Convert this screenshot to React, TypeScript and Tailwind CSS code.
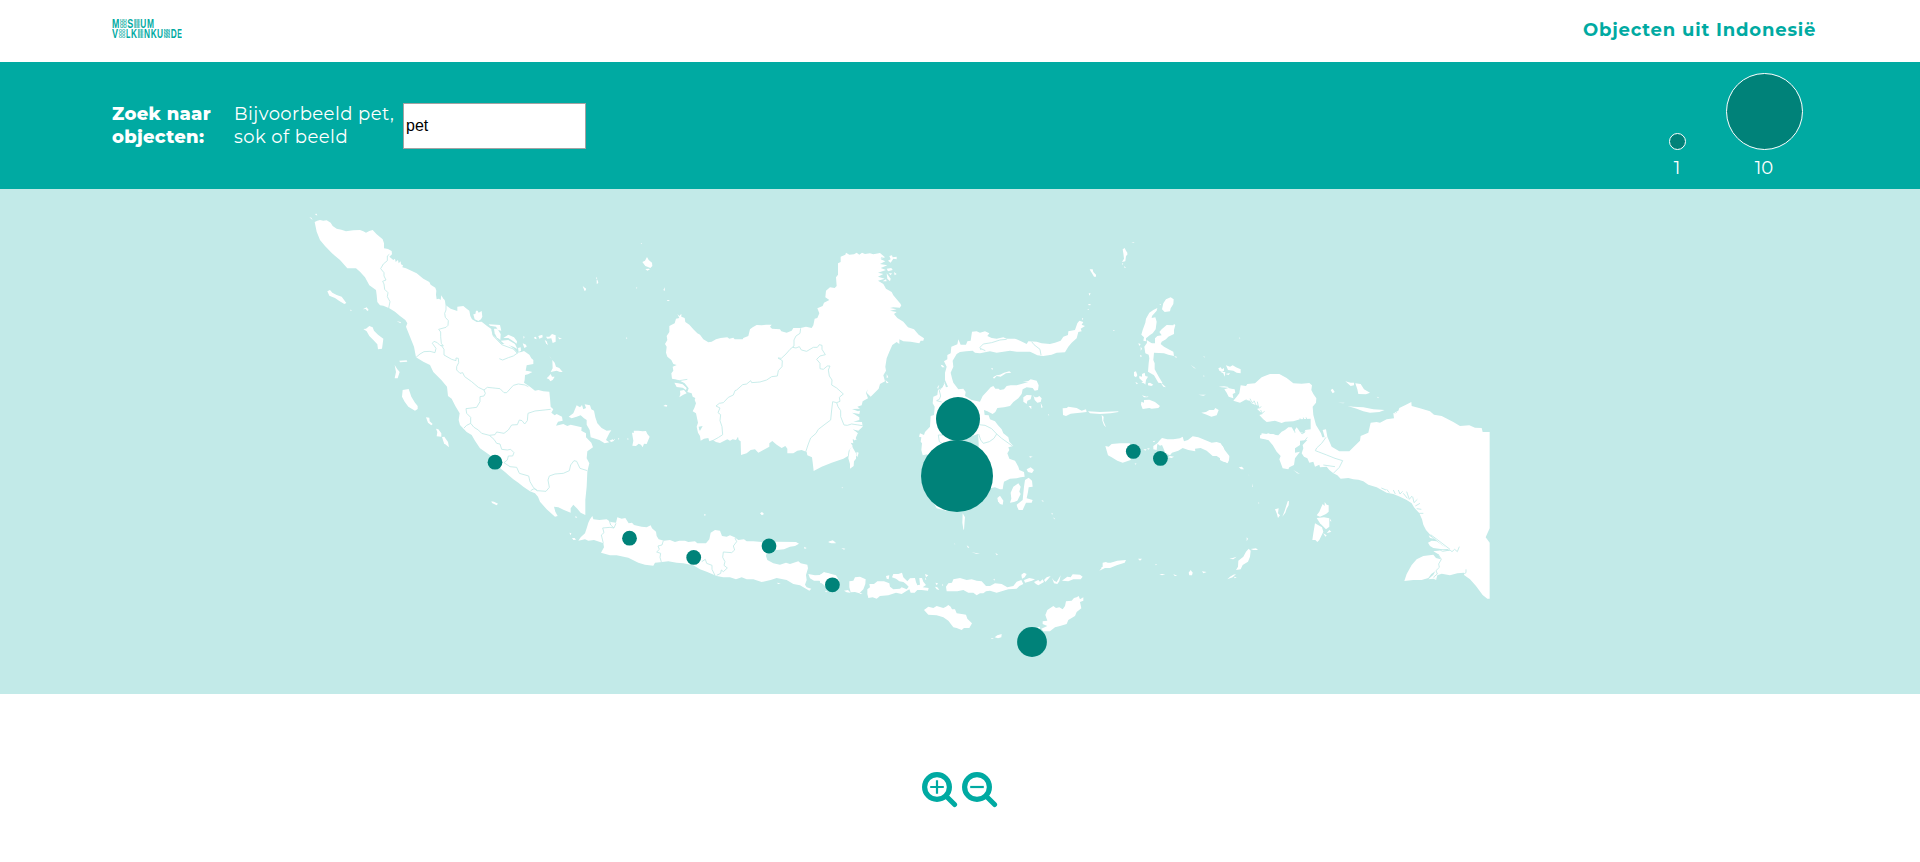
import React from "react";

type Sheet = { x: number; y: number; land: string[]; water?: string[]; borders?: string[] };

// Each sheet is drawn at three units per pixel from its own origin.
const sheets: Sheet[] = [
  {
    // Sumatra
    x: 300,
    y: 200,
    land: [
      "44,66 52,62 60,60 70,62 80,61 92,68 98,78 110,86 124,89 138,94 160,91 180,90 190,94 198,98 208,93 218,90 230,103 248,118 252,130 252,145 264,147 275,153 276,163 268,170 280,180 285,176 287,186 294,180 296,190 302,184 303,193 309,196 307,202 318,205 350,220 370,236 388,246 392,254 406,263 409,272 408,284 410,298 417,296 422,300 424,286 430,296 434,300 438,316 452,326 472,333 472,320 490,318 500,326 508,332 511,348 516,358 530,366 545,365 560,377 575,388 578,405 588,414 605,432 622,432 640,445 652,458 664,456 672,453 688,464 694,475 700,480 700,492 680,496 677,512 688,514 697,516 684,523 675,525 674,540 672,548 690,560 705,572 715,570 730,574 748,575 750,595 752,620 760,628 754,638 764,646 770,642 786,650 788,662 774,665 768,677 790,672 802,678 812,674 845,682 844,692 858,700 858,712 874,728 879,742 862,754 860,775 868,790 864,806 862,815 860,860 856,900 856,945 842,938 832,926 820,914 812,925 812,938 792,930 775,922 762,920 766,935 773,948 765,950 740,928 720,905 714,890 705,880 690,874 670,860 655,848 640,838 615,816 600,804 570,766 540,745 525,722 515,705 500,696 480,675 476,660 479,640 466,618 455,596 444,588 441,560 424,540 400,516 390,495 370,485 348,472 342,440 330,410 318,380 322,370 316,360 300,348 285,335 268,325 250,317 240,316 232,306 230,285 228,270 208,256 195,232 180,215 168,205 142,205 120,180 96,160 75,138 60,120 50,95",
      "44,42 50,41 52,47", "28,52 34,53 38,60",
      "82,274 90,270 97,278 110,285 125,290 139,309 133,312 118,303 105,294 88,287",
      "188,328 200,322 206,330 202,333 197,327", "150,329 155,330 153,334", "290,364 302,366 302,370",
      "190,387 198,386 208,378 218,382 222,392 234,404 250,416 248,432 246,446 234,448 232,433 220,420 208,408 200,394",
      "298,482 320,481 322,485 300,487", "284,495 292,508 299,516 293,535 284,535 288,516",
      "308,570 326,567 330,578 334,590 345,608 353,618 353,627 345,632 325,620 314,605 306,590",
      "378,652 388,653 389,664 398,672 394,676 384,668", "408,686 415,688 424,700 424,710 410,709 412,696",
      "426,711 433,710 444,726 447,742 432,730", "574,904 582,905 594,911 590,916 576,909",
      "520,343 526,342 528,332 533,332 536,338 545,333 547,350 543,358 535,363 524,358",
      "566,373 600,375 604,392 594,390 588,380 570,377", "582,386 592,386 602,402 601,420 590,412 584,400",
      "602,422 625,420 645,432 652,447 640,440 612,431", "610,414 625,404 642,412 651,424 650,431 640,424 625,414",
      "654,444 662,442 663,452 656,456", "668,430 678,434 680,440 673,444", "670,408 674,411 671,416",
      "702,412 708,410 710,418 704,416", "715,408 727,404 728,412 718,416", "738,410 748,410 756,402 767,406 767,425 758,429 754,415 742,416",
      "734,420 740,424 744,436 738,430", "774,412 786,416 778,418",
      "757,480 764,488 768,500 778,504 788,516 780,516 770,512 752,516 758,505", "740,535 747,528 752,522 756,530 764,530 758,540 751,544 747,538",
      "748,468 756,478 752,474",
      "806,650 820,640 824,630 830,616 840,622 846,615 850,628 858,624 854,613 870,616 874,628 882,632 886,652 892,670 905,684 920,692 934,691 928,700 922,712 918,720 928,727 914,730 898,720 872,712 869,690 860,674 860,660 852,655 842,646 830,650 815,655",
      "928,722 938,718 943,722 934,726", "954,714 958,716 955,719",
      "848,258 858,266 854,274", "890,238 894,246 890,252", "888,232 892,234 889,238",
      "826,948 832,952 827,954",
    ],
    borders: [
      "268,163 262,168 262,182 250,192 242,206 252,218 252,228 258,240 248,244 252,252 254,268 264,278 262,290 270,305 266,325",
      "438,305 438,330 434,340 436,352 445,362 444,376 438,382 416,388 422,396 422,410 424,430 430,438 420,436 412,428 402,424 397,430 408,445 405,458 390,454 372,455 360,462 348,472",
      "424,436 432,448 432,465 455,478 468,482 468,474 475,475 476,488 470,500 470,510 480,520 488,518 494,530 515,545 535,562 552,570 562,562 600,566 612,578 620,578 640,556 655,552 675,555 685,560",
      "552,570 556,580 552,588 540,590 540,605 530,622 498,626 500,640 512,652 512,670 500,676 492,684",
      "512,670 522,682 535,690 545,700 568,706 585,704 590,696 612,700 625,690 635,675 652,674 658,660 666,662 674,672 682,662 684,640 705,633 752,628",
      "568,706 582,718 590,730 600,732 605,748 622,750 632,748 642,758 638,768 625,768 622,780 612,788 630,800 650,802 658,820 686,828 690,845 700,862 712,872 738,874 748,862 744,840 748,828 765,822 790,820 808,812 812,795 822,782 830,784 840,805 862,812",
      "712,872 702,866 692,872",
      "598,476 608,480 625,473 640,468 654,458",
      "575,388 580,408 605,434 640,447 652,460",
    ],
  },
  {
    // Natuna, Belitung
    x: 540,
    y: 240,
    land: [
      "307,66 315,62 321,51 326,60 336,68 337,78 331,84 322,80 316,78", "316,87 326,86 330,88 322,92",
      "132,145 138,146 136,153", "172,118 175,128 171,132", "370,150 375,142 374,153", "380,180 390,180 384,184",
      "276,578 282,578 281,572 295,572 308,574 318,573 322,582 329,590 324,602 320,612 312,611 308,622 303,614 296,611 288,618 277,617 280,602",
      "262,594 266,597 263,600", "258,292 262,294 260,298", "302,10 306,9 304,13", "288,142 292,143 290,146",
      "665,818 670,820 664,824", "905,742 910,743 906,745", "222,596 225,598 222,600",
    ],
  },
  {
    // Kalimantan
    x: 640,
    y: 240,
    land: [
      "112,222 118,228 124,221 124,230 134,234 136,246 148,254 160,268 172,280 180,284 190,298 205,307 215,305 228,298 242,294 262,292 268,296 280,293 284,298 308,298 310,294 325,288 330,268 338,262 350,255 365,256 378,254 395,254 390,260 396,266 420,268 424,274 440,278 455,272 460,264 482,264 498,260 515,264 520,256 524,236 532,234 538,220 532,205 548,198 552,188 568,180 556,172 558,152 570,142 584,144 590,138 588,112 594,104 594,70 602,66 602,50 616,44 618,38 628,44 642,43 650,38 658,44 666,38 675,42 690,40 700,43 720,39 735,52 722,58 736,64 720,72 742,76 722,84 738,90 714,98 730,102 714,110 734,116 714,122 730,132 738,146 755,156 760,166 770,178 782,192 780,203 760,202 750,204 770,208 750,212 770,216 762,222 772,234 790,245 804,262 822,268 836,284 852,295 850,302 842,302 838,310 812,305 790,304 778,298 778,312 770,306 757,315 748,335 740,355 736,380 738,392 730,406 735,424 720,432 716,446 704,458 692,470 680,458 684,448 678,458 684,475 668,484 665,496 652,500 660,506 636,507 654,514 660,512 658,522 636,518 658,532 658,540 640,545 666,546 668,560 655,572 638,568 654,580 645,592 650,600 638,598 640,610 632,608 638,618 626,632 624,648 610,656 575,668 545,680 521,693 519,675 516,652 502,646 500,636 485,630 472,632 460,640 442,640 442,626 436,618 425,624 410,614 397,603 388,610 388,620 370,630 355,638 345,628 332,630 320,640 303,645 302,604 296,600 294,590 288,600 278,598 270,602 262,598 240,609 228,606 218,600 208,604 205,594 192,596 182,602 180,588 174,578 170,560 174,548 168,520 158,514 163,504 168,490 164,480 166,474 158,470 155,460 142,456 146,445 134,430 120,422 96,416 94,400 100,392 98,380 110,375 100,372 94,360 82,350 78,338 80,320 75,312 82,300 80,288 88,276 88,258 104,250 108,236 118,234",
      "103,428 115,430 128,433 140,444 138,450 128,443 110,441", "120,452 132,450 140,460 130,464 118,472 121,462",
      "70,498 76,494 82,496 80,500", "629,630 636,618 640,626 648,640 648,656 642,664 641,678 630,686 630,672 625,655",
      "650,636 656,638 652,652 649,646", "748,48 756,46 758,52 770,50 770,58 760,56 752,68 744,62 752,58",
      "740,86 754,84 758,90 744,94", "740,100 752,116 750,124 742,116", "746,100 756,100 752,106", "762,96 770,102 764,106",
      "728,124 738,118 740,124", "740,402 745,412 740,414", "736,420 746,428 740,430",
      "644,572 652,582 644,602 638,592",
    ],
    water: ["724,52 734,54 722,56", "176,560 188,558 180,572 178,570"],
    borders: [
      "482,265 480,280 468,288 462,300 462,318 450,328 438,342 424,355 414,354 427,362 426,380 415,392 412,408 395,410 380,420 360,426 335,428 332,422 320,432 308,434 290,450 285,452 280,465 265,472 250,488 238,490 228,498 240,504 234,518 242,524 240,542 246,560 248,584 236,592 218,602",
      "458,322 468,324 478,320 484,330 500,334 520,322 532,322 538,314 546,316 546,328 556,344 540,348 530,358 540,370 540,386 550,388 562,378 570,378 565,390 568,408 576,420 575,435 590,444 610,462 598,472 600,484 590,488 578,485 575,510 572,540 552,555 535,568 528,580 512,594 505,612 497,636",
      "590,488 594,500 602,512 602,530 612,555 622,556 635,552 668,557",
      "96,418 118,422 142,418", "104,424 130,430 142,444",
    ],
  },
  {
    // Sulawesi
    x: 900,
    y: 300,
    land: [
      "532,70 538,62 550,66 545,74 555,78 542,86 545,94 535,96 530,115 515,128 505,140 495,157 470,158 455,164 430,168 412,166 400,160 390,155 350,155 330,152 310,155 290,158 270,154 240,160 225,158 218,152 198,154 180,156 170,162 158,182 160,200 152,218 156,235 160,248 175,268 190,266 197,276 195,288 215,300 240,305 248,288 260,275 272,262 280,258 286,266 296,266 300,270 312,268 320,258 332,256 350,256 372,250 385,246 368,244 385,243 392,238 410,242 416,256 414,270 404,272 398,264 380,262 368,268 365,282 355,295 340,306 330,318 312,322 292,324 286,336 278,342 262,334 252,330 254,345 266,346 270,358 285,364 294,376 305,388 310,400 325,412 328,425 340,438 325,442 328,450 322,460 328,476 345,482 355,500 358,510 372,516 374,530 362,532 350,535 330,536 312,545 310,555 308,568 300,568 285,562 270,565 235,520 160,600 138,632 110,625 102,610 90,550 82,463 68,466 64,450 66,430 62,425 64,412 57,410 60,400 72,405 75,396 90,380 92,348 102,345 104,320 98,310 100,290 112,285 114,270 128,262 133,246 138,262 144,260 135,240 135,218 140,200 132,184 142,178 142,165 152,160 154,140 172,133 175,118 182,134 198,134 202,124 212,122 216,95 230,94 240,98 255,94 268,100 262,108 275,114 290,116 310,112 320,116 345,116 360,122 380,132 385,124 410,125 425,130 450,132 465,128 482,122 490,110 504,105 505,94 525,90",
      "122,194 128,196 134,202 126,202", "118,254 112,262 114,268",
      "279,232 290,226 300,224 312,218 328,214 334,218 318,220 302,230 290,228 282,236", "273,205 279,205 277,210",
      "370,292 380,285 395,286 392,298 382,302 380,312 370,305", "400,285 404,292 412,292 418,288 425,295 422,306 412,308 404,300",
      "422,308 428,322 424,324", "386,318 394,318 394,328", "445,342 448,346 444,346", "388,468 398,470 390,473",
      "488,325 500,324 505,320 530,324 545,332 558,328 560,336 540,338 525,340 512,341 498,348 489,345", "564,334 600,336 655,334 655,336 632,340 600,342 570,340",
      "605,345 611,350 610,362 618,382 612,376 607,362",
      "375,540 386,533 396,542 398,560 386,562 384,576 380,595 398,600 395,608 378,608 368,630 356,630 352,622 350,614 368,600 370,580 372,560", 
      "340,560 355,550 362,560 358,575 362,582 352,602 342,606 330,608 334,596 332,578",
      "292,594 300,587 310,602 308,614 300,612 294,604", "380,508 392,502 402,510 396,519 384,516",
      "188,640 195,652 194,662 192,690 190,688 187,668", "424,600 430,602 430,607", "454,638 459,641 456,644", "460,652 466,658 462,657",
      "564,12 570,14 566,16", "0,12 4,16 0,22", "640,90 643,93 640,93",
    ],
    water: ["184,428 205,412 234,402 236,428 236,450 215,440"],
    borders: [
      "243,150 240,142 250,132 275,128 300,120 320,118", "243,146 256,152", "395,125 402,134 420,148 423,165",
      "133,250 118,272 122,288 118,298 110,302 125,306", "236,374 255,376 275,386 290,402 282,415 268,425 250,430 242,420 236,402", "290,402 305,415 340,440", "130,405 115,405 118,425 128,432",
      "260,334 262,345",
    ],
  },
  {
    // Moluccas
    x: 1040,
    y: 230,
    land: [
      "248,58 254,54 258,62 262,68 262,74 258,78 256,94 246,96 252,86 250,70", "246,99 250,101 248,105", "252,108 258,113 254,114",
      "149,118 158,118 160,126 168,134 168,140 162,140 156,130 152,124", "146,190 152,190 148,197", "146,222 152,222 150,227", "144,236 147,240 143,240", "274,38 284,36 280,39", "126,264 130,266 126,270",
      "392,202 401,208 400,222 392,235 390,244 374,246 366,238 370,220 378,208", "359,222 363,222 360,226",
      "352,234 350,242 336,258 335,264 346,262 350,275 347,298 338,310 330,315 318,325 318,334 310,332 312,322 304,314 308,300 316,278 318,266 328,248 340,240",
      "313,350 320,340 345,340 345,325 352,318 365,316 358,306 365,298 380,285 400,286 402,282 406,285 402,300 402,312 385,320 378,328 365,335 362,342 372,350 390,360 400,365 402,378 385,374 372,370 342,368 340,390 344,400 344,418 355,438 368,460 355,458 342,436 324,425 326,400 328,385 326,374 316,370", 
      "402,378 412,381 408,383", "320,330 335,340 340,350 322,348",
      "362,458 370,464 378,472 370,470", "295,340 302,342 298,348", "302,350 306,356 302,362", "300,374 306,378 302,382",
      "282,426 288,424 292,436 288,442 282,438", "298,438 306,440 306,432 314,428 316,438 324,440 318,450 316,464 306,452 298,445", "324,460 330,458 340,464 334,468 324,466", "286,456 294,460 290,463", "304,458 312,454 312,460",
      "303,524 304,515 312,518 312,510 328,509 345,516 360,528 355,534 335,536 328,534 308,537", "306,496 320,500 326,498 322,502 312,502",
      "484,548 498,546 508,540 522,540 526,534 536,540 530,556 514,560 500,554", "535,415 542,412 546,418 552,414 552,422 546,426 538,422",
      "558,406 570,410 578,406 588,412 602,418 602,430 590,428 580,422 564,420", "542,426 556,426 554,440 550,430", "556,432 570,429 566,435",
      "536,470 552,469 566,471 564,473 545,472", "553,478 565,474 574,476 584,478 586,488 578,492 580,505 566,500 560,488", "452,404 468,416 462,414", "475,494 498,494 490,497", "490,436 494,438 491,440", "490,378 496,382 492,382", "220,300 226,302 221,302",
      "196,648 206,650 215,642 240,640 268,640 285,650 272,690 248,698 232,692 215,682 204,676", "284,700 290,701 286,704",
      "310,658 320,658 316,662", "322,654 330,656 324,659", "338,634 346,632 342,637",
      "360,630 366,624 382,628 400,628 420,625 428,620 432,634 444,630 458,619 475,622 495,630 515,638 530,636 542,640 552,656 552,666 568,680 567,690 562,700 548,690 530,678 518,678 500,662 482,654 465,656 466,664 445,660 428,654 415,662 396,668 390,676 372,668 358,645 352,642 350,660 340,658 340,648 352,640",
      "384,682 390,678 402,680 395,684",
      "662,624 665,610 680,612 700,612 720,620 720,654 708,648 698,634 680,628", "598,322 601,325 598,326", "600,712 606,714 602,716",
    ],
    water: ["358,648 366,645 375,666 352,668"],
  },
  {
    // Papua
    x: 1220,
    y: 350,
    land: [
      "62,106 78,108 82,102 105,100 125,82 140,76 150,72 178,72 200,84 220,100 245,101 268,99 276,106 274,120 280,132 289,145 288,158 278,170 280,195 288,225 303,250 307,262 314,262 308,240 318,238 322,260 335,290 358,304 388,304 400,292 420,272 422,258 445,248 452,218 470,216 480,218 500,208 522,205 520,190 535,182 538,174 558,164 574,156 575,168 600,175 630,184 642,194 665,198 700,216 720,228 748,226 765,233 785,234 788,246 809,246 809,535 797,562 809,578 809,746 802,746 788,735 768,708 750,688 732,675 732,668 712,670 690,676 665,671 652,676 648,690 640,675 650,655 652,640 662,628 654,612 640,604 662,600 690,602 660,580 632,556 618,540 610,524 606,508 598,490 582,472 575,460 560,450 540,440 520,432 500,428 485,420 470,412 445,404 430,394 415,389 400,388 385,384 362,386 352,376 340,370 328,360 320,350 300,352 298,344 285,350 280,335 268,338 262,325 252,320 245,310 250,295 248,285 262,270 240,272 240,285 225,295 225,308 240,305 225,325 222,345 208,352 205,358 188,355 178,328 182,318 170,305 158,285 145,270 120,265 120,256 132,254 145,250 160,256 175,256 185,245 195,240 205,232 215,232 222,244 230,232 240,245 252,250 256,240 272,238 272,206 240,208 220,214 195,215 185,219 165,212 140,216 130,208 118,195 128,192 112,178 118,168 105,164 95,160 90,152 75,150 60,158 40,152 50,140 58,130",
      "553,693 560,672 575,645 590,628 610,618 640,614 648,624 662,628 655,648 648,662 634,672 625,684 605,690 580,690", "625,688 636,678 644,672 644,684 650,690 640,686",
      "624,578 635,572 650,574 670,588 688,597 668,598 640,594 630,588", "626,556 642,566 630,564",
      "376,94 392,98 402,98 402,106 392,108", "406,100 422,102 432,118 450,128 438,133 415,132 412,118", "332,120 338,116 344,126 338,130", "354,158 374,158 370,160",
      "383,168 400,170 430,172 460,178 494,180 478,186 450,188 430,184 410,176", "470,140 476,142 475,145",
      "308,462 314,468 314,456 320,464 326,466 326,485 318,492 300,500 290,496 298,485", "290,504 312,502 328,505 328,530 318,538 300,520", "285,520 306,532 310,545 298,570 292,576 286,570 277,570 280,550",
      "328,540 334,545 320,550", "332,506 334,515 330,512", "310,550 320,556 316,560",
      "203,454 207,453 206,466 200,476 196,488 187,500 194,482", "165,478 176,475 174,490 180,496 174,504 170,490", "115,456 118,459 116,462",
      "86,596 92,602 90,620 84,635 68,645 62,658 48,660 54,650 55,632 70,620 78,605", "92,597 108,595 114,600 100,600", "28,626 38,624 50,620 40,628", "22,688 30,680 40,674 48,672 38,682", "80,562 84,566 80,574", "42,680 50,682 44,685",
      "56,352 66,350 72,358 64,358", "80,368 90,380 86,376", "96,400 98,410 96,412", "220,360 240,372 232,370",
      "0,285 8,288 14,300 28,318 24,338 10,335 0,330",
    ],
    borders: [
      "318,262 305,280 290,294 286,302 320,315 345,325 368,332 358,352 340,370",
      "635,602 660,600 668,604 690,600 696,605 704,598 712,605 718,590", "632,554 660,575 690,598", "654,612 664,628 656,642 658,652 648,662 652,672 640,682",
      "738,658 738,668 732,672", "78,148 86,158", "90,146 96,158 104,154", "102,152 110,170", "112,155 116,175 124,170", "122,180 126,190 134,184",
      "520,420 526,432", "535,420 540,432 548,424", "550,430 562,445", "560,425 568,448 576,438", "578,440 582,458 592,448", "586,468 600,460", "590,476 604,478", "590,490 610,490", "500,418 508,428", "484,414 498,420",
      "240,205 242,214", "250,203 252,212", "258,202 262,212", "222,235 225,248", "238,240 246,252 256,245", "248,280 262,262", "310,345 345,350", "522,178 530,188", "515,182 526,190",
    ],
  },
  {
    // Java
    x: 560,
    y: 500,
    land: [
      "90,58 97,48 100,58 118,60 140,58 152,66 168,68 172,52 185,56 196,54 206,70 216,68 222,75 245,80 260,82 272,76 276,85 288,95 290,108 296,118 312,122 330,120 345,126 358,122 375,122 385,126 405,124 412,130 438,130 448,118 452,98 465,90 480,92 486,108 500,110 510,106 524,112 535,120 552,118 560,124 580,124 605,126 622,150 618,168 622,180 640,190 660,194 678,188 690,192 715,184 722,190 742,194 744,205 738,225 740,240 735,254 740,262 754,266 748,272 720,256 700,252 680,240 650,234 632,240 605,246 580,238 560,238 545,232 528,238 510,232 490,232 470,228 440,215 420,208 400,196 370,190 350,188 325,184 300,187 285,188 280,197 255,194 235,188 205,173 170,166 150,166 123,158 132,142 130,130 120,126 102,120 85,122 75,118 55,122 62,112 75,100 80,85 85,68",
      "605,135 650,125 708,126 717,131 705,138 690,140 672,148 650,150", "745,222 765,226 780,225 792,216 810,222 828,230 835,250 815,262 795,258 778,242 762,242 750,235",
      "600,40 606,36 612,42 606,46", "36,114 44,114 48,119 40,120", "28,98 34,100 32,106", "806,126 818,121 828,128 812,128", "732,140 740,144 734,147", "720,128 724,130", "650,248 662,250 655,252", "432,42 438,44 434,48", "795,273 803,274 798,277",
    ],
    borders: [
      "148,62 152,75 162,84 168,70", "162,84 150,82 128,84 132,98 124,105 130,130", "310,122 306,135 294,138 298,148 290,156 302,160 300,172 304,186",
      "425,185 436,178 440,190 456,196 456,208 465,226", "525,114 530,125 520,138 524,150 515,158 490,156 488,172 495,185 492,196 502,204 490,215 484,210 482,220 470,226",
    ],
  },
  {
    // Lesser Sunda Islands
    x: 820,
    y: 540,
    land: [
      "0,104 20,98 48,106 58,122 40,140 0,128",
      "88,124 100,122 105,112 120,110 137,118 136,132 130,148 118,160 105,156 92,157 88,142", "72,152 84,150 92,158 80,157", "118,158 128,160 120,162",
      "142,162 142,148 150,142 148,132 162,132 172,124 192,124 208,130 210,140 220,148 240,146 245,142 260,148 266,140 258,132 250,126 238,124 228,116 216,112 220,102 235,102 246,98 250,112 262,124 270,115 285,114 288,126 292,136 300,134 298,114 306,114 310,125 318,135 308,142 326,144 324,152 305,150 292,150 284,158 272,158 268,148 258,154 245,162 228,158 205,166 180,168 170,176 158,172 145,174",
      "198,108 208,106 206,118 200,116", "315,102 325,106 318,112", "316,112 319,120 315,118", "346,128 354,130 350,136", "345,140 352,142 358,150 350,148", "366,132 370,135 367,138",
      "378,140 385,130 396,128 400,118 420,114 440,120 455,118 470,122 485,124 498,138 510,138 525,130 545,132 562,142 580,138 590,125 604,120 610,132 598,138 590,146 565,148 545,154 530,158 510,152 498,154 490,160 480,160 470,166 460,158 445,158 430,150 412,154 380,154",
      "604,104 612,98 620,102 614,112 606,116", "612,120 628,114 645,118 636,122 615,128", "642,126 655,120 660,125 668,118 672,126 655,136 648,132", "672,120 680,112 692,108 684,118 676,126",
      "696,114 702,122 710,126 722,106 718,124 712,132 702,130", "726,122 742,110 752,112 758,103 780,104 788,110 782,118 760,118 745,124", "520,118 524,116 524,122",
      "312,210 325,200 340,204 350,198 370,204 378,200 385,195 392,200 396,208 405,208 410,220 425,222 438,224 442,236 456,250 448,264 432,264 425,270 410,264 400,262 385,242 370,232 350,226 325,224",
      "512,295 522,294 516,297", "524,292 532,286 545,282 544,292 534,295",
      "770,172 776,168 780,178 790,172 790,182 780,186 784,205 770,216 765,228 745,240 740,252 720,258 705,262 690,274 670,274 664,266 682,258 668,252 668,244 682,242 676,225 682,210 700,198 708,204 718,202 728,208 735,198 738,184 755,182 762,174",
      "652,262 660,260 658,270", "838,92 848,80 848,68 858,66 870,72 870,84 855,84",
      "24,6 34,2 48,10 34,10", "64,24 76,26 72,29", "440,16 448,22 444,24", "454,36 480,42 470,42", "526,38 534,44 530,46", "404,10 406,13 403,13",
    ],
  },
  {
    // Southwestern islands
    x: 1090,
    y: 540,
    land: [
      "32,84 48,76 52,68 62,68 82,62 108,60 104,68 80,76 60,84", "144,56 156,56 150,62", "208,102 226,102 216,106",
      "296,98 302,90 308,98 306,106 298,106", "250,102 262,108 254,108", "336,94 350,96 340,100", "196,72 202,74 197,76",
    ],
  },
];

const objects = [
  { x: 495, y: 462.2, r: 7.4 },
  { x: 629.5, y: 538.2, r: 7.4 },
  { x: 693.7, y: 557.4, r: 7.4 },
  { x: 769, y: 546, r: 7.4 },
  { x: 832.4, y: 584.8, r: 7.4 },
  { x: 958, y: 419, r: 22 },
  { x: 957, y: 476, r: 36 },
  { x: 1133.3, y: 451.4, r: 7.4 },
  { x: 1160.4, y: 458.4, r: 7.4 },
  { x: 1032, y: 642, r: 14.9 },
];

type Glyph = { c: string; x: number; w: number; y: number; pattern?: boolean };

const glyphs: Glyph[] = [
  { c: "M", x: 0, w: 22, y: 26 },
  { c: "U", x: 24, w: 20, y: 26, pattern: true },
  { c: "S", x: 46, w: 18, y: 26 },
  { c: "E", x: 66, w: 18, y: 26, pattern: true },
  { c: "U", x: 85, w: 18, y: 26 },
  { c: "M", x: 105, w: 21, y: 26 },
  { c: "V", x: 0, w: 18, y: 58 },
  { c: "O", x: 20, w: 20, y: 58, pattern: true },
  { c: "L", x: 42, w: 13, y: 58 },
  { c: "K", x: 57, w: 18, y: 58 },
  { c: "E", x: 77, w: 17, y: 58, pattern: true },
  { c: "N", x: 96, w: 18, y: 58 },
  { c: "K", x: 116, w: 18, y: 58 },
  { c: "U", x: 135, w: 18, y: 58 },
  { c: "N", x: 155, w: 19, y: 58, pattern: true },
  { c: "D", x: 176, w: 18, y: 58 },
  { c: "E", x: 196, w: 14, y: 58 },
];

function Logo() {
  return (
    <svg width="70" height="21" viewBox="0 0 210 63" className="fill-[#00aaa2] font-['Liberation_Sans'] font-bold">
      {glyphs.map((g, i) =>
        g.pattern ? (
          [0, 9, 18].map((dy) => (
            <text key={`${i}-${dy}`} x={g.x} y={g.y - dy} fontSize="11" textLength={g.w} lengthAdjust="spacingAndGlyphs">
              {g.c + g.c}
            </text>
          ))
        ) : (
          <text key={i} x={g.x} y={g.y} fontSize="37" textLength={g.w} lengthAdjust="spacingAndGlyphs">
            {g.c}
          </text>
        ),
      )}
    </svg>
  );
}

function IndonesiaMap() {
  return (
    <svg viewBox="0 189 1920 505" className="block h-full w-full">
      {sheets.map((s, i) => (
        <g key={i} transform={`translate(${s.x} ${s.y}) scale(0.33333)`}>
          {s.land.map((p, j) => (
            <polygon key={j} points={p} fill="#fff" />
          ))}
          {s.water?.map((p, j) => (
            <polygon key={j} points={p} fill="#c2eae8" />
          ))}
          {s.borders?.map((p, j) => (
            <polyline key={j} points={p} fill="none" stroke="#c2eae8" strokeWidth="2.6" strokeLinejoin="round" />
          ))}
        </g>
      ))}
      {objects.map((o, i) => (
        <circle key={i} cx={o.x} cy={o.y} r={o.r} fill="#008279" />
      ))}
    </svg>
  );
}

function ZoomIcon({ plus }: { plus?: boolean }) {
  return (
    <svg width="36" height="36" viewBox="0 0 36 36" fill="none" stroke="#00aaa2">
      <circle cx="15" cy="15" r="12.4" strokeWidth="5.2" />
      <path d="M24 24l8.6 8.6" strokeWidth="5" strokeLinecap="round" />
      <path d={plus ? "M8.2 15h13.6M15 8.2v13.6" : "M8.2 15h13.6"} strokeWidth="2.2" />
    </svg>
  );
}

export default function App() {
  return (
    <div className="flex h-[862px] flex-col bg-white font-['Montserrat','Inter',sans-serif]">
      <header className="flex h-[62px] items-start justify-between pl-28 pr-[113px]">
        <div className="pt-[19px]">
          <Logo />
        </div>
        <h1 className="w-[224px] whitespace-nowrap pt-[19px] text-[18px] font-bold leading-[23px] tracking-[0.82px] text-[#00aaa2]">
          Objecten uit Indonesië
        </h1>
      </header>
      <section className="flex h-[127px] bg-[#00aaa2] pl-28 text-[18px] leading-[23px] text-white">
        <label htmlFor="search" className="w-[122px] whitespace-nowrap pt-[41px] font-extrabold tracking-[0.3px]">
          Zoek naar
          <br />
          objecten:
        </label>
        <p className="w-[169px] whitespace-nowrap pt-[41px] tracking-[0.45px]">
          Bijvoorbeeld pet,
          <br />
          sok of beeld
        </p>
        <input
          id="search"
          defaultValue="pet"
          className="mt-[41px] h-[46px] w-[183px] border border-[#a3a3a3] bg-white pl-[2px] font-['Liberation_Sans',sans-serif] text-[16px] text-black outline-none"
        />
        <div className="ml-auto flex items-end pb-[9px] pr-[118px]">
          <div className="flex w-[76px] flex-col items-center gap-[7px] mr-[11px]">
            <div className="size-[17px] rounded-full border border-white bg-[#008279]" />
            <span>1</span>
          </div>
          <div className="ml-0 flex w-[76px] flex-col items-center gap-[7px]">
            <div className="size-[77px] shrink-0 rounded-full border border-white bg-[#008279]" />
            <span>10</span>
          </div>
        </div>
      </section>
      <main className="h-[505px] bg-[#c2eae8]">
        <IndonesiaMap />
      </main>
      <footer className="flex justify-center gap-[4px] pt-[78px]">
        <ZoomIcon plus />
        <ZoomIcon />
      </footer>
    </div>
  );
}
